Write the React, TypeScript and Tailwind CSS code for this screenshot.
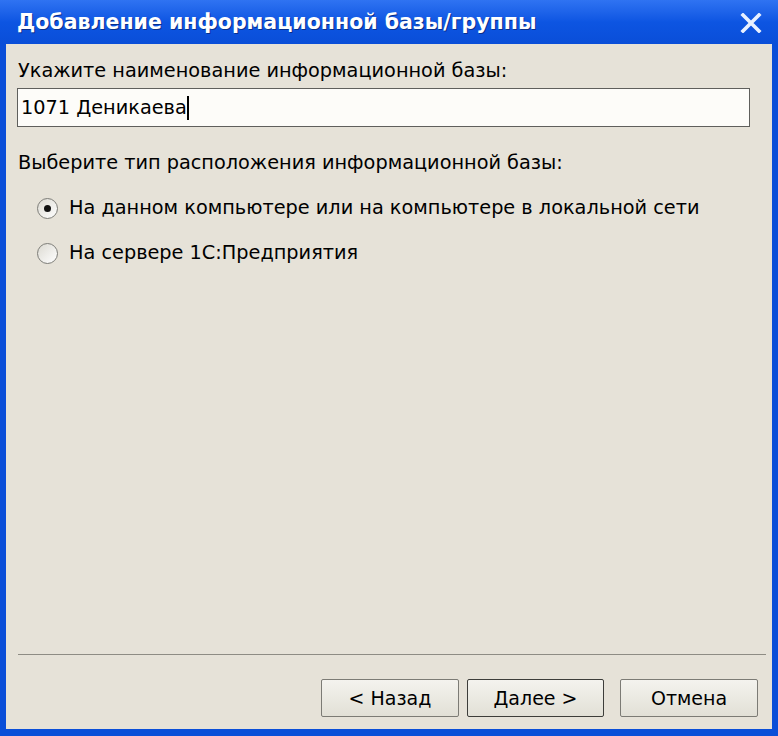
import React from 'react';

function Radio({ checked }: { checked?: boolean }) {
  return (
    <span className="w-[21px] h-[21px] rounded-full border border-[#7d7d78] bg-gradient-to-br from-[#dcdad2] to-white flex items-center justify-center shrink-0">
      {checked && <span className="w-[7px] h-[7px] rounded-full bg-[#111]" />}
    </span>
  );
}

function Button({ label, primary }: { label: string; primary?: boolean }) {
  return (
    <button
      className={`h-[38px] rounded-[2px] border bg-gradient-to-b from-[#f4f3ee] to-[#e2e0d6] text-[19px] text-black flex items-center justify-center ${
        primary ? 'border-[#3d3d3a] w-[137px]' : 'border-[#7c7b75] w-[138px]'
      }`}
    >
      {label}
    </button>
  );
}

export default function App() {
  return (
    <div
      className="w-[778px] h-[736px] flex flex-col bg-[#0a4ed8] overflow-hidden"
      style={{ fontFamily: '"DejaVu Sans", Verdana, sans-serif' }}
    >
      {/* Title bar */}
      <div className="h-[44px] shrink-0 flex items-center justify-between pl-[17px] pr-[16px] bg-gradient-to-b from-[#2f73f2] via-[#0d55e2] to-[#0a4ed8]">
        <span className="text-white font-bold text-[20.5px] [text-shadow:1px_1px_0_#0a2f8a]">
          Добавление информационной базы/группы
        </span>
        <svg width="22" height="20" viewBox="0 0 22 20" className="mt-[1px]">
          <path d="M3 2 L19 18 M19 2 L3 18" stroke="#e8f0ff" strokeWidth="3.6" strokeLinecap="square" />
        </svg>
      </div>

      {/* Body */}
      <div className="flex-1 mx-[6px] mb-[7px] bg-[#e6e2d8] flex flex-col text-[19.3px] text-black">
        <div className="pl-[12px] pt-[16px] leading-[22px]">Укажите наименование информационной базы:</div>
        <div className="ml-[11px] mr-[22px] mt-[6px] h-[39px] bg-[#fdfcf9] border border-[#5f5f5c] flex items-center pl-[3px] leading-[22px]">
          1071 Деникаева
          <span className="w-[2px] h-[24px] bg-black" />
        </div>

        <div className="pl-[12px] mt-[25px] leading-[22px]">Выберите тип расположения информационной базы:</div>
        <div className="pl-[31px] mt-[23px] flex items-center gap-[11px] leading-[22px]">
          <Radio checked />
          <span>На данном компьютере или на компьютере в локальной сети</span>
        </div>
        <div className="pl-[31px] mt-[23px] flex items-center gap-[11px] leading-[22px]">
          <Radio />
          <span>На сервере 1С:Предприятия</span>
        </div>

        <div className="flex-1" />

        <div className="ml-[12px] mr-[6px] h-px bg-[#8e8c84]" />
        <div className="flex justify-end pr-[14px] pt-[24px] pb-[12px]">
          <div className="flex gap-[8px]">
            <Button label="< Назад" />
            <Button label="Далее >" primary />
          </div>
          <div className="ml-[16px]">
            <Button label="Отмена" />
          </div>
        </div>
      </div>
    </div>
  );
}
